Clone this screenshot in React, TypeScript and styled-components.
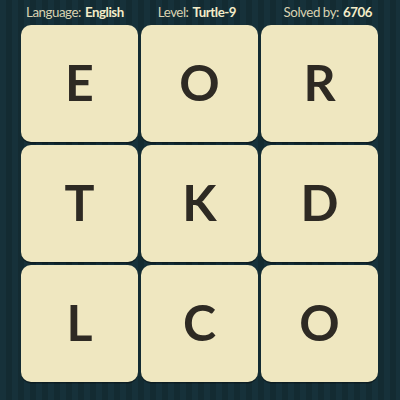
import React from "react";
import styled, { createGlobalStyle } from "styled-components";

const Global = createGlobalStyle`
  html, body { margin: 0; padding: 0; }
  body {
    width: 400px;
    height: 400px;
    overflow: hidden;
    background-color: #142d34;
    background-image: repeating-linear-gradient(
      90deg,
      #16313a 0px,
      #16313a 6px,
      #132b32 6px,
      #132b32 12px
    );
    font-family: Lato, "Noto Sans", sans-serif;
  }
`;

const Page = styled.div`
  width: 400px;
  height: 400px;
  display: flex;
  flex-direction: column;
`;

const Header = styled.div`
  height: 25px;
  display: flex;
  align-items: center;
  gap: 34px;
  padding: 0 28px 2px 26px;
  box-sizing: border-box;
  font-size: 13.3px;
  letter-spacing: -0.45px;
  white-space: nowrap;
`;

const Stat = styled.span<{ $push?: boolean }>`
  margin-left: ${(p) => (p.$push ? "auto" : "0")};
  color: #d9d3b2;
  font-weight: 400;
  b {
    font-weight: 700;
    color: #f3ecc8;
    margin-left: 4px;
  }
`;

const Grid = styled.div`
  display: grid;
  grid-template-columns: repeat(3, 117px);
  grid-auto-rows: 117px;
  gap: 3px;
  padding-left: 21px;
`;

const Tile = styled.div`
  background: #efe7c0;
  border-radius: 10px;
  box-shadow: 0 1.5px 0 rgba(0, 0, 0, 0.35);
  display: flex;
  align-items: center;
  justify-content: center;
  padding-bottom: 3px;
  box-sizing: border-box;
  color: #2e2a23;
  font-family: Lato, "Noto Sans", sans-serif;
  font-weight: 700;
  font-size: 50px;
  line-height: 1;
`;

const letters = ["E", "O", "R", "T", "K", "D", "L", "C", "O"];

export default function App() {
  return (
    <>
      <Global />
      <Page>
        <Header>
          <Stat>
            Language:<b>English</b>
          </Stat>
          <Stat>
            Level:<b>Turtle-9</b>
          </Stat>
          <Stat $push>
            Solved by:<b>6706</b>
          </Stat>
        </Header>
        <Grid>
          {letters.map((l, i) => (
            <Tile key={i}>{l}</Tile>
          ))}
        </Grid>
      </Page>
    </>
  );
}
